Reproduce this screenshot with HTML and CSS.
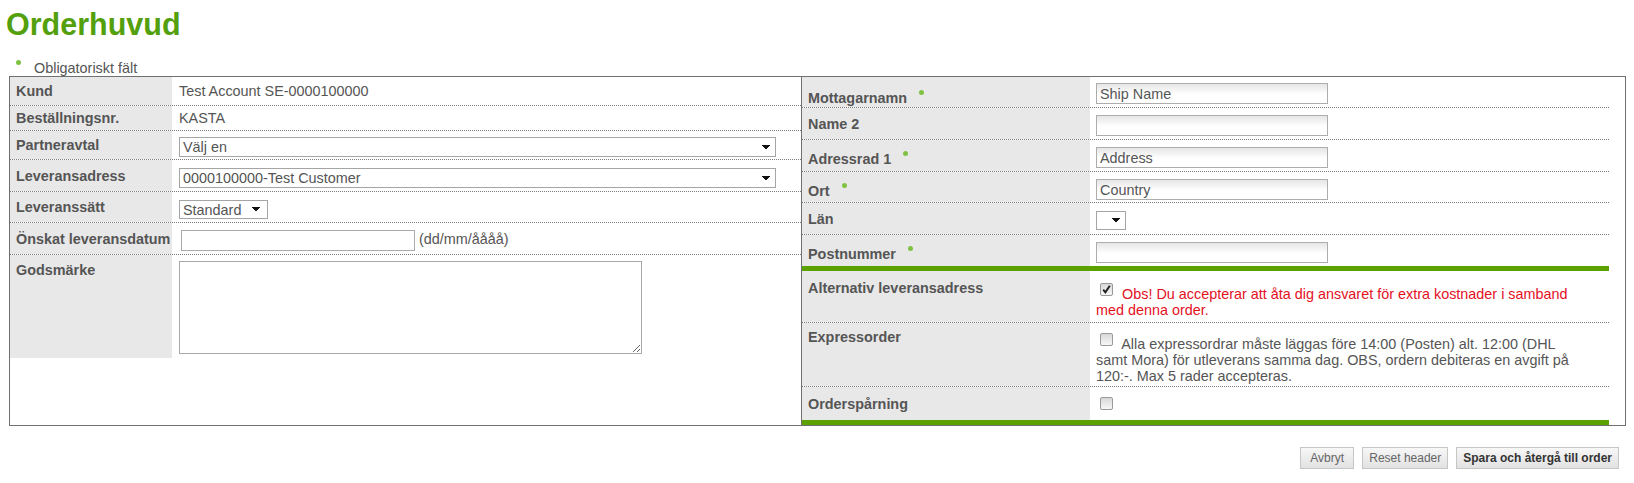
FILE: index.html
```html
<!DOCTYPE html>
<html lang="sv">
<head>
<meta charset="utf-8">
<title>Orderhuvud</title>
<link rel="stylesheet" href="styles.css">
</head>
<body>
<div class="page">
  <h1 class="title">Orderhuvud</h1>
  <div class="legend"><span class="req-dot"></span>Obligatoriskt fält</div>

  <div class="panels">
    <div class="left">
      <div class="lrow r-kund"><div class="lab">Kund</div><div class="val">Test Account SE-0000100000</div></div>
      <div class="lrow r-nr"><div class="lab">Beställningsnr.</div><div class="val">KASTA</div></div>
      <div class="lrow r-partner"><div class="lab">Partneravtal</div><div class="val ctl"><select class="sel wide"><option>Välj en</option></select></div></div>
      <div class="lrow r-adress"><div class="lab">Leveransadress</div><div class="val ctl"><select class="sel wide"><option>0000100000-Test Customer</option></select></div></div>
      <div class="lrow r-satt"><div class="lab">Leveranssätt</div><div class="val ctl"><select class="sel std"><option>Standard</option></select></div></div>
      <div class="lrow r-datum"><div class="lab">Önskat leveransdatum</div><div class="val ctl"><input class="date" type="text"><span class="hint">(dd/mm/åååå)</span></div></div>
      <div class="lrow r-gods"><div class="lab">Godsmärke</div><div class="val"><textarea class="ta"></textarea></div></div>
    </div>

    <div class="right">
      <div class="rtable">
        <div class="rrow h31 first"><div class="rlab req">Mottagarnamn<span class="star"></span></div><div class="rval"><input class="ship" type="text" value="Ship Name"></div></div>
        <div class="rrow h32"><div class="rlab">Name 2</div><div class="rval"><input class="ship" type="text"></div></div>
        <div class="rrow h32"><div class="rlab req">Adressrad 1<span class="star"></span></div><div class="rval"><input class="ship" type="text" value="Address"></div></div>
        <div class="rrow h31"><div class="rlab req">Ort<span class="star"></span></div><div class="rval"><input class="ship" type="text" value="Country"></div></div>
        <div class="rrow h32"><div class="rlab">Län</div><div class="rval"><select class="sel lan"><option></option></select></div></div>
        <div class="rrow h31 nob"><div class="rlab req">Postnummer<span class="star"></span></div><div class="rval"><input class="ship" type="text"></div></div>
        <div class="gbar"></div>
        <div class="rrow r-alt"><div class="rlab">Alternativ leveransadress</div><div class="rval"><span class="cb"><svg width="11" height="11" viewBox="0 0 11 11"><path d="M2.2 5.6 L4.4 8.4 L8.8 1.8" fill="none" stroke="#1e1e1e" stroke-width="1.9"/></svg></span> <span class="warn">Obs! Du accepterar att åta dig ansvaret för extra kostnader i samband med denna order.</span></div></div>
        <div class="rrow r-exp"><div class="rlab">Expressorder</div><div class="rval"><span class="cb"></span> Alla expressordrar måste läggas före 14:00 (Posten) alt. 12:00 (DHL samt Mora) för utleverans samma dag. OBS, ordern debiteras en avgift på 120:-. Max 5 rader accepteras.</div></div>
        <div class="rrow r-ord nob"><div class="rlab">Orderspårning</div><div class="rval"><span class="cb"></span></div></div>
        <div class="gbar"></div>
      </div>
    </div>
  </div>

  <div class="actions">
    <button class="btn" type="button">Avbryt</button>
    <button class="btn" type="button">Reset header</button>
    <button class="btn primary" type="button">Spara och återgå till order</button>
  </div>
</div>
</body>
</html>
```

FILE: styles.css
```css
* { box-sizing: border-box; }
html, body { margin: 0; padding: 0; background: #fff; }
body {
  font-family: "Liberation Sans", Arial, sans-serif;
  font-size: 14.4px;
  color: #555;
}

.title {
  margin: 7px 0 0 6px;
  font-size: 30.5px;
  line-height: 34px;
  font-weight: bold;
  color: #53a00c;
}

.legend {
  margin-top: 19px;
  height: 16px;
  line-height: 14px;
  white-space: nowrap;
}
.req-dot, .star {
  display: inline-block;
  width: 5px;
  height: 5px;
  border-radius: 50%;
  background: #7fc242;
  vertical-align: 8px;
}
.req-dot { margin: 0 13px 0 16px; }
.star { margin-left: 12px; }

.panels {
  margin-left: 9px;
  width: 1617px;
  height: 350px;
  display: grid;
  grid-template-columns: 791px 1fr;
  border: 1px solid #707070;
}

/* left panel */
.left { display: flex; flex-direction: column; }
.lrow {
  display: grid;
  grid-template-columns: 162px 1fr;
  border-bottom: 1px dotted #7a7a7a;
}
.lab {
  background: #e8e8e8;
  font-weight: bold;
  padding-left: 6px;
  white-space: nowrap;
  display: flex;
  align-items: center;
}
.val {
  padding-left: 7px;
  display: flex;
  align-items: center;
  white-space: nowrap;
}
.val.ctl { align-items: flex-end; padding-bottom: 3px; }
.r-kund { height: 29px; }
.r-nr { height: 25px; }
.r-partner { height: 29px; }
.r-partner .val.ctl { padding-bottom: 2px; }
.r-adress { height: 32px; }
.r-satt { height: 31px; }
.r-datum { height: 32px; }
.r-gods { height: 103px; border-bottom: none; }
.r-gods .lab { align-items: flex-start; padding-top: 7px; }
.r-gods .val { align-items: flex-start; padding-top: 6px; }

.sel {
  -webkit-appearance: none;
  appearance: none;
  display: block;
  height: 20px;
  border: 1px solid #a5a5a5;
  border-radius: 0;
  background-color: #fff;
  background-image:
    linear-gradient(to bottom left, #111 50%, transparent 50%),
    linear-gradient(to bottom right, #111 50%, transparent 50%);
  background-size: 4px 5px, 4px 5px;
  background-repeat: no-repeat;
  background-position: right 9px center, right 5px center;
  font-family: inherit;
  font-size: 14.4px;
  color: #555;
  padding: 0 20px 0 3px;
  margin: 0;
  outline: none;
}
.sel.wide { width: 597px; }
.sel.std { width: 89px; height: 19px; background-position: right 11px center, right 7px center; }
.sel.lan { width: 30px; height: 19px; margin-top: 1px; }

.date {
  display: block;
  width: 234px;
  height: 21px;
  margin: 0 0 0 2px;
  border: 1px solid #ababab;
  background: #fff;
  font: inherit;
  padding: 0 3px;
}
.hint { align-self: center; margin: 4px 0 0 4px; }

.ta {
  display: block;
  width: 463px;
  height: 93px;
  margin: 0;
  border: 1px solid #a9a9a9;
  font: inherit;
  resize: both;
}

/* right panel */
.right {
  border-left: 1px solid #707070;
  display: flex;
  flex-direction: column;
}
.rtable { width: 807px; display: flex; flex-direction: column; }
.rrow {
  display: grid;
  grid-template-columns: 288px 1fr;
  border-bottom: 1px dotted #7a7a7a;
}
.rrow.nob { border-bottom: none; }
.h31 { height: 31px; }
.h32 { height: 32px; }
.rlab {
  background: #e8e8e8;
  font-weight: bold;
  padding: 8px 0 0 6px;
  white-space: nowrap;
}
.rlab.req { padding-top: 11px; }
.rrow.first .rlab.req { padding-top: 13px; }
.rval { padding: 7px 22px 0 6px; }
.rrow.first .rval { padding-top: 6px; }

.ship {
  display: block;
  width: 232px;
  height: 21px;
  margin: 0;
  border: 1px solid #adadad;
  padding: 0 3px;
  background: linear-gradient(#e6e6e6, #fff 55%);
  font: inherit;
  color: #555;
}

.gbar { height: 5px; background: #5ba100; }

.r-alt { height: 52px; }
.r-alt .rlab { padding-top: 9px; }
.r-alt .rval { padding-top: 9px; }
.r-exp { height: 64px; }
.r-exp .rlab { padding-top: 6px; }
.r-exp .rval { padding-top: 7px; }
.r-ord { height: 33px; }
.r-ord .rlab { padding-top: 9px; }
.r-ord .rval { padding-top: 7px; }

.cb {
  display: inline-block;
  width: 13px;
  height: 13px;
  margin: 3px 5px 3px 4px;
  border: 1px solid #999;
  border-radius: 2px;
  background: linear-gradient(#d8d8d8, #f7f7f7);
  vertical-align: baseline;
}
.cb svg { display: block; }
.warn { color: #e3101e; }

/* buttons */
.actions {
  margin: 21px 0 0 9px;
  width: 1617px;
  padding-right: 7px;
  display: flex;
  justify-content: flex-end;
  gap: 8px;
}
.btn {
  min-width: 54px;
  height: 22px;
  padding: 0 6px;
  margin: 0;
  border: 1px solid #c6c6c6;
  border-radius: 0;
  background: linear-gradient(#f7f7f7, #e2e2e2);
  font-family: inherit;
  font-size: 12px;
  color: #666;
}
.btn.primary { font-weight: bold; color: #333; }
```
